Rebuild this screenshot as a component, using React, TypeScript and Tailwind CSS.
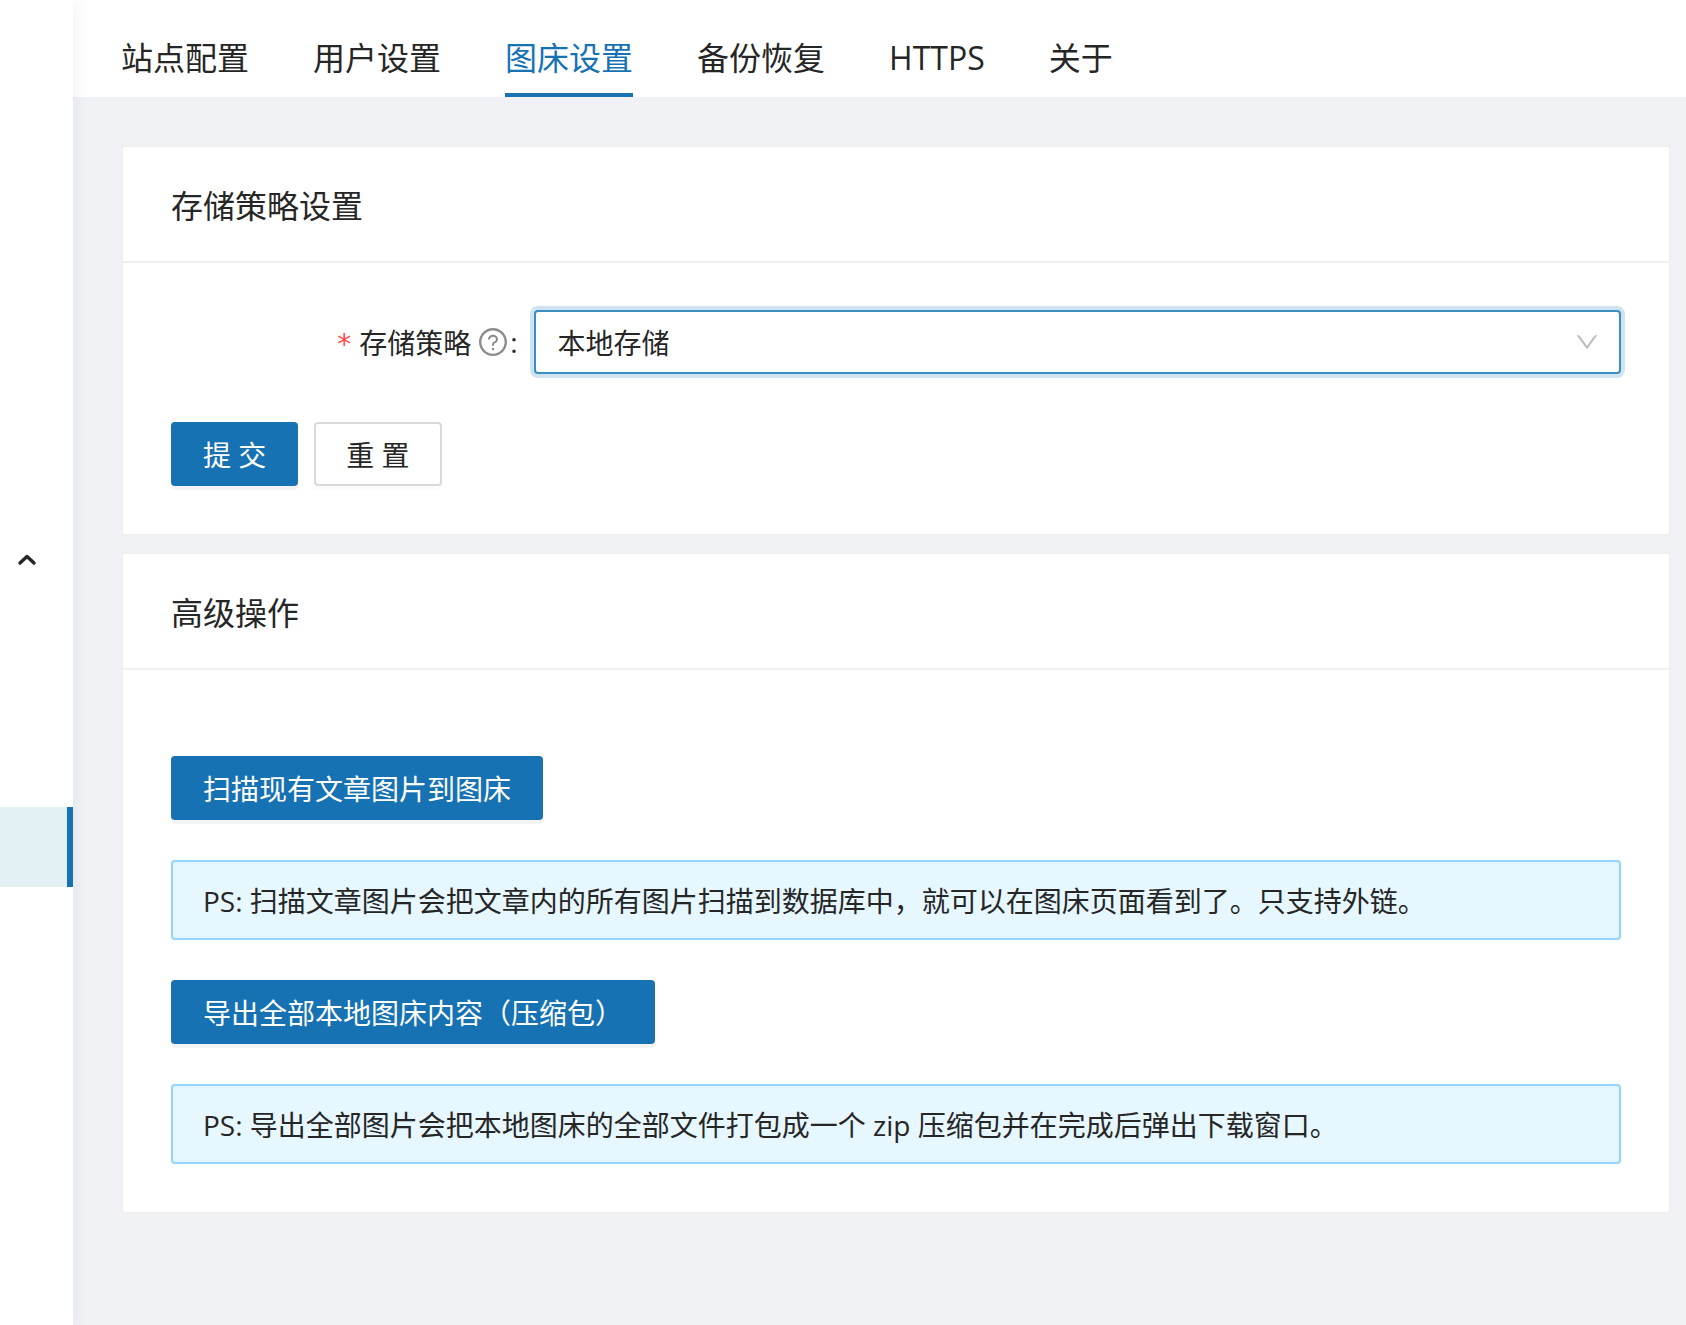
import clsx from "clsx";
import type { ReactNode } from "react";

const tabs = ["站点配置", "用户设置", "图床设置", "备份恢复", "HTTPS", "关于"];

function Sidebar() {
  return (
    <aside className="relative z-10 flex w-[73px] shrink-0 flex-col bg-white shadow-[4px_0_16px_rgba(29,35,41,0.05)]">
      <nav className="flex flex-col pt-[520px]">
        <button type="button" aria-label="展开" className="flex h-20 items-center pl-4">
          <svg
            width="22"
            height="22"
            viewBox="0 0 22 22"
            fill="none"
            stroke="#262626"
            strokeWidth="3.4"
            strokeLinecap="round"
            strokeLinejoin="round"
          >
            <path d="M4 14 L11 7.5 L18 14" />
          </svg>
        </button>
        <a href="#image" aria-label="图床" className="mt-[207px] flex h-20 justify-end bg-[#e3f1f5]">
          <span className="w-1.5 bg-[#1772b4]" />
        </a>
      </nav>
    </aside>
  );
}

function Card({ title, className, children }: { title: string; className?: string; children: ReactNode }) {
  return (
    <section className="rounded-sm border-2 border-[#f0f0f0] bg-white">
      <h2 className="border-b-2 border-[#f0f0f0] px-12 pt-[34px] pb-[30px] text-[32px] leading-[50px]">{title}</h2>
      <div className={clsx("px-12 pb-12", className)}>{children}</div>
    </section>
  );
}

function Button({ primary, children }: { primary?: boolean; children: ReactNode }) {
  return (
    <button
      type="button"
      className={clsx(
        "h-16 rounded-sm border-2 px-[30px] pt-[2px] leading-[44px] whitespace-nowrap",
        primary
          ? "border-[#1772b4] bg-[#1772b4] text-white shadow-[0_4px_0_rgba(0,0,0,0.045)]"
          : "border-[#d9d9d9] bg-white shadow-[0_4px_0_rgba(0,0,0,0.016)]"
      )}
    >
      {children}
    </button>
  );
}

function Note({ children }: { children: ReactNode }) {
  return (
    <p className="my-10 rounded-sm border-2 border-[#91d5ff] bg-[#e6f7ff] px-[30px] pt-[17px] pb-[15px] leading-[44px] last:mb-0">
      {children}
    </p>
  );
}

export default function App() {
  return (
    <div className="flex min-h-screen bg-[#f0f2f5] font-['Open_Sans','Noto_Sans_CJK_SC',sans-serif] text-[28px] text-[#262626]">
      <Sidebar />

      <main className="min-w-0 flex-1">
        <nav className="flex gap-16 bg-white px-12 pt-4 text-[32px] leading-[52px]">
          {tabs.map((tab) => (
            <a
              key={tab}
              href={`#${tab}`}
              className={clsx(
                "border-b-4 pt-4 pb-[9px] whitespace-nowrap",
                tab === "图床设置" ? "border-[#1772b4] text-[#1772b4]" : "border-transparent"
              )}
            >
              {tab}
            </a>
          ))}
        </nav>

        <div className="flex flex-col gap-4 py-12 pr-[15px] pl-12">
          <Card title="存储策略设置" className="pt-[47px]">
            <form>
              <div className="flex items-center">
                <label htmlFor="storage" className="flex w-1/4 items-center justify-end pr-4">
                  <span className="mr-2 pt-[6px] font-['DejaVu_Sans'] text-[#ff4d4f]">*</span>
                  <span className="pt-[2px]">存储策略</span>
                  <svg
                    className="ml-2"
                    width="28"
                    height="28"
                    viewBox="64 64 896 896"
                    fill="#8c8c8c"
                    aria-hidden="true"
                  >
                    <path d="M512 64C264.6 64 64 264.6 64 512s200.6 448 448 448 448-200.6 448-448S759.4 64 512 64zm0 820c-205.4 0-372-166.6-372-372s166.6-372 372-372 372 166.6 372 372-166.6 372-372 372z" />
                    <path d="M623.6 316.7C593.6 290.4 554 276 512 276s-81.6 14.5-111.6 40.7C369.2 344 352 380.7 352 420v7.6c0 4.4 3.6 8 8 8h48c4.4 0 8-3.6 8-8V420c0-44.1 43.1-80 96-80s96 35.9 96 80c0 31.1-22 59.6-56.1 72.7-21.2 8.1-39.2 22.3-52.1 40.9-13.1 19-19.9 41.8-19.9 64.9V620c0 4.4 3.6 8 8 8h48c4.4 0 8-3.6 8-8v-22.7a48.3 48.3 0 0130.9-44.8c59-22.7 97.1-74.7 97.1-132.5.1-39.3-17.1-76-48.3-103.3zM472 732a40 40 0 1080 0 40 40 0 10-80 0z" />
                  </svg>
                  <span className="ml-[3px]">:</span>
                </label>
                <div className="relative flex-1">
                  <select
                    id="storage"
                    className="block h-16 w-full appearance-none rounded-sm border-2 border-[#3a8fc1] bg-white px-[22px] pt-[2px] shadow-[0_0_0_4px_rgba(23,114,180,0.2)] outline-none"
                  >
                    <option>本地存储</option>
                  </select>
                  <svg
                    className="pointer-events-none absolute top-5 right-[22px]"
                    width="24"
                    height="24"
                    viewBox="64 64 896 896"
                    fill="#bfbfbf"
                    aria-hidden="true"
                  >
                    <path d="M884 256h-75c-5.1 0-9.9 2.5-12.9 6.6L512 654.2 227.9 262.6c-3-4.1-7.8-6.6-12.9-6.6h-75c-6.5 0-10.3 7.4-6.5 12.7l352.6 486.1c12.8 17.6 39 17.6 51.7 0l352.6-486.1c3.9-5.3.1-12.7-6.4-12.7z" />
                  </svg>
                </div>
              </div>
              <div className="mt-12 flex gap-4">
                <Button primary>提 交</Button>
                <Button>重 置</Button>
              </div>
            </form>
          </Card>

          <Card title="高级操作" className="pt-[86px]">
            <Button primary>扫描现有文章图片到图床</Button>
            <Note>PS: 扫描文章图片会把文章内的所有图片扫描到数据库中，就可以在图床页面看到了。只支持外链。</Note>
            <Button primary>导出全部本地图床内容（压缩包）</Button>
            <Note>PS: 导出全部图片会把本地图床的全部文件打包成一个 zip 压缩包并在完成后弹出下载窗口。</Note>
          </Card>
        </div>
      </main>
    </div>
  );
}
